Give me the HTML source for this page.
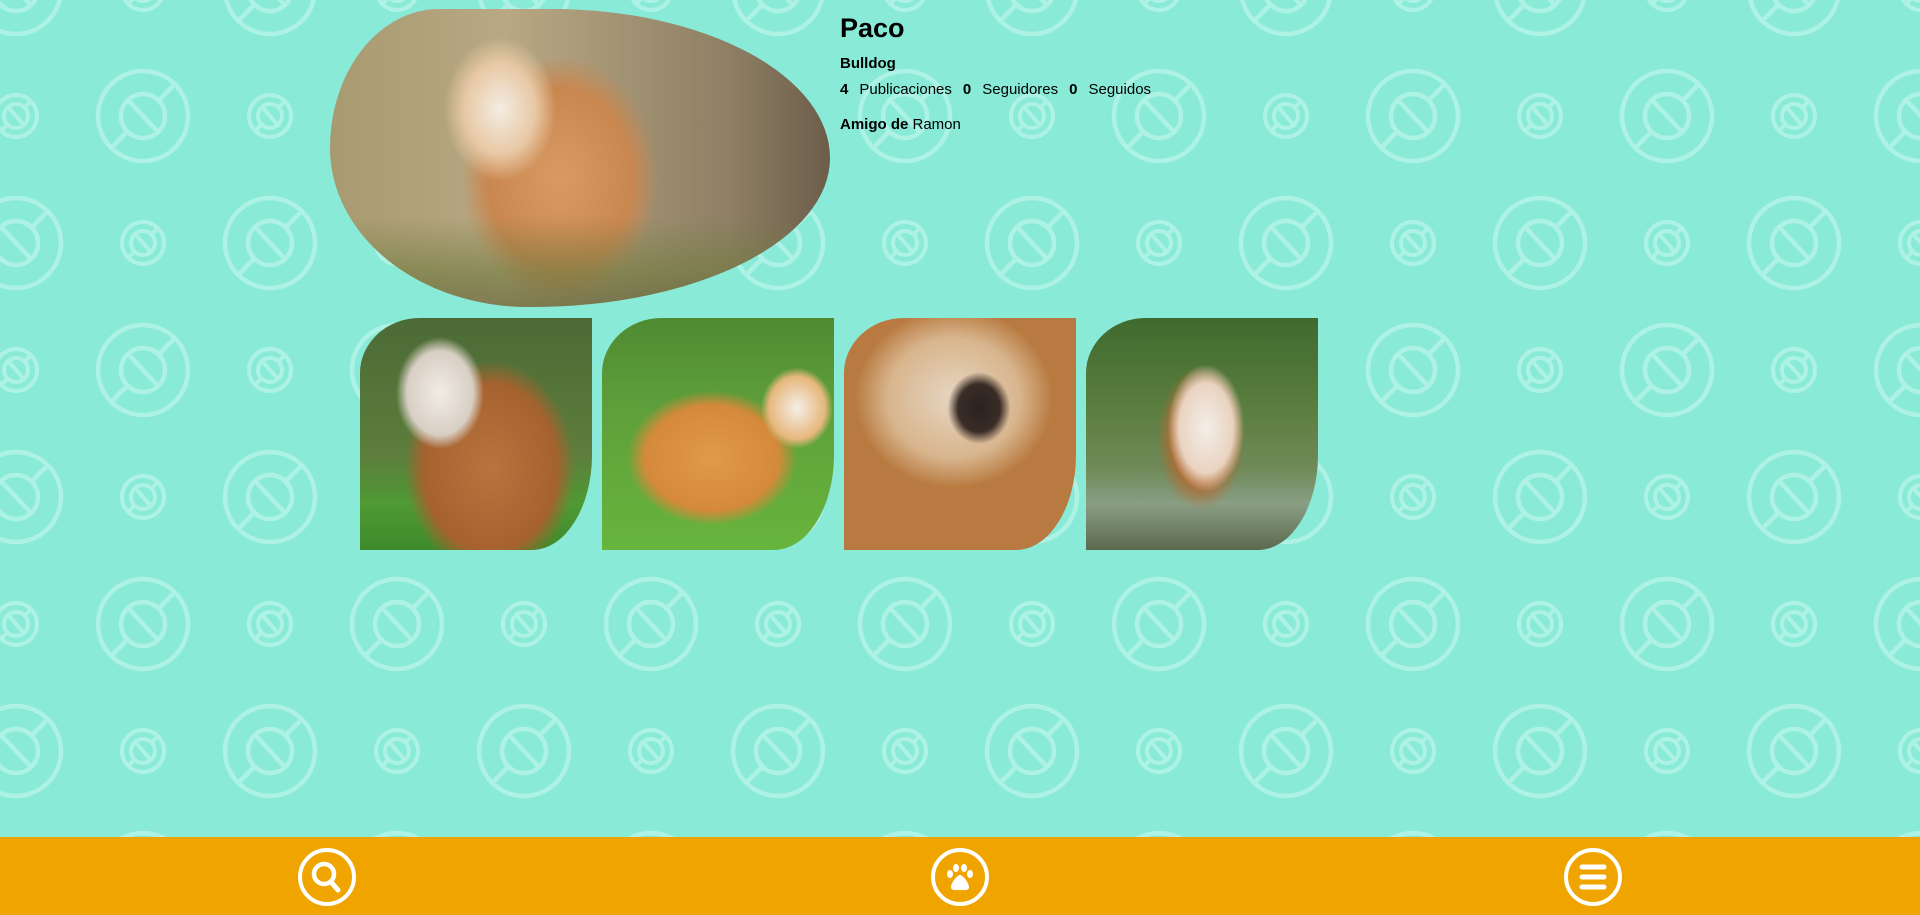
<!DOCTYPE html>
<html><head><meta charset="utf-8"><style>
html,body{margin:0;padding:0;width:1920px;height:915px;overflow:hidden;font-family:"Liberation Sans","DejaVu Sans",sans-serif;}
body{background:#89ebd7;position:relative;}
#bg{position:absolute;left:0;top:0;}
.main{position:absolute;left:330px;top:9px;width:500px;height:298px;border-radius:110px 280px 300px 200px / 140px 150px 150px 160px;overflow:hidden;
background:radial-gradient(ellipse 70px 90px at 170px 100px,#f3ece2 0,#e8c9a6 50%,transparent 80%),
radial-gradient(ellipse 120px 150px at 230px 170px,#d99a62 0,#c98750 60%,transparent 82%),
linear-gradient(90deg,#a89a70 0,#b8a884 35%,#8e7f64 80%,#6c5d4a 100%);}
.main:after{content:"";position:absolute;left:0;right:0;bottom:0;height:90px;background:linear-gradient(180deg,transparent,#6f7a3e 60%,#5a5f32);opacity:.6}
.t{position:absolute;top:318px;width:232px;height:232px;border-radius:60px 0 60px 0 / 55px 0 95px 0;overflow:hidden;}
.t1{left:360px;background:radial-gradient(ellipse 55px 70px at 80px 75px,#f1ece6 0,#d8cfc4 60%,transparent 80%),radial-gradient(ellipse 95px 120px at 130px 150px,#b8743e 0,#a5622f 70%,transparent 90%),linear-gradient(180deg,#4c6a36 0,#5d7e3c 60%,#4f9a34 80%,#3f8a2b 100%);}
.t2{left:602px;background:radial-gradient(ellipse 40px 45px at 195px 90px,#f4efe8 0,#e6b77c 70%,transparent 90%),radial-gradient(ellipse 95px 75px at 110px 140px,#e09a4a 0,#d48a3a 70%,transparent 90%),linear-gradient(180deg,#4f8a32 0,#5ea03a 40%,#67b53d 100%);}
.t3{left:844px;background:radial-gradient(ellipse 35px 40px at 135px 90px,#2a2220 0,#3a2c26 60%,transparent 90%),radial-gradient(ellipse 110px 100px at 110px 80px,#e6d6c2 0,#d8b58d 60%,#b87a40 90%),linear-gradient(180deg,#c48a50 0,#c48a50 60%,#b98040 70%,#c8c3bb 72%,#e6e2dc 100%);}
.t4{left:1086px;background:radial-gradient(ellipse 45px 75px at 120px 110px,#f4eee8 0,#e9d3c0 60%,transparent 85%),radial-gradient(ellipse 55px 90px at 115px 120px,#c0783e 0,#b06a32 50%,transparent 80%),linear-gradient(180deg,#3f6a2e 0,#5c7e40 40%,#6f8a58 65%,#8a9e84 80%,#5c6a4e 100%);}
.info{position:absolute;left:840px;top:12px;color:#000;}
.name{font-size:27px;font-weight:bold;margin:0;line-height:32px;}
.breed{font-size:15px;font-weight:bold;margin-top:11px;line-height:18px;}
.stats{font-size:15px;margin-top:8px;line-height:18px;}
.stats b{margin-right:11px}.stats span{margin-right:11px}
.amigo{font-size:15px;margin-top:17px;line-height:18px;}
.foot{position:absolute;left:0;top:837px;width:1920px;height:78px;background:#f0a400;}
.foot svg{position:absolute;top:10px;}
</style></head><body>
<svg id="bg" width="1920" height="837">
<defs>
<g id="big" fill="none" stroke="#aef2e6" stroke-width="4.5">
<circle r="45"/><circle r="22"/><line x1="-14" y1="-15" x2="14" y2="15"/><line x1="16" y1="-16" x2="32" y2="-32"/><line x1="-16" y1="16" x2="-32" y2="32"/>
</g>
<g id="sm" fill="none" stroke="#aef2e6" stroke-width="4">
<circle r="21"/><circle r="12"/><line x1="-7" y1="-8" x2="7" y2="8"/><line x1="9" y1="-9" x2="16" y2="-16"/><line x1="-9" y1="9" x2="-16" y2="16"/>
</g>
<pattern id="p" x="16" y="-11" width="254" height="254" patternUnits="userSpaceOnUse">
<use href="#big" x="0" y="0"/><use href="#big" x="254" y="0"/><use href="#big" x="0" y="254"/><use href="#big" x="254" y="254"/>
<use href="#big" x="127" y="127"/>
<use href="#sm" x="127" y="0"/><use href="#sm" x="127" y="254"/>
<use href="#sm" x="0" y="127"/><use href="#sm" x="254" y="127"/>
</pattern>
</defs>
<rect width="1920" height="837" fill="url(#p)"/>
</svg>
<div class="main"></div>
<div class="info">
<div class="name">Paco</div>
<div class="breed">Bulldog</div>
<div class="stats"><b>4</b><span>Publicaciones</span><b>0</b><span>Seguidores</span><b>0</b><span>Seguidos</span></div>
<div class="amigo"><b>Amigo de</b> Ramon</div>
</div>
<div class="t t1"></div><div class="t t2"></div><div class="t t3"></div><div class="t t4"></div>
<div class="foot">
<svg style="left:297px" width="60" height="60" viewBox="0 0 60 60"><circle cx="30" cy="30" r="27" fill="none" stroke="#fff" stroke-width="4"/><circle cx="27" cy="27" r="10" fill="none" stroke="#fff" stroke-width="4.5"/><line x1="34" y1="35" x2="41" y2="43" stroke="#fff" stroke-width="5" stroke-linecap="round"/></svg>
<svg style="left:930px" width="60" height="60" viewBox="0 0 60 60"><circle cx="30" cy="30" r="27" fill="none" stroke="#fff" stroke-width="4"/><ellipse cx="20" cy="27" rx="3" ry="4" fill="#fff"/><ellipse cx="26" cy="21" rx="3" ry="4" fill="#fff"/><ellipse cx="34" cy="21" rx="3" ry="4" fill="#fff"/><ellipse cx="40" cy="27" rx="3" ry="4" fill="#fff"/><path d="M30 28 C27 28 21 36 21 40 C21 44 25 43 30 43 C35 43 39 44 39 40 C39 36 33 28 30 28Z" fill="#fff"/></svg>
<svg style="left:1563px" width="60" height="60" viewBox="0 0 60 60"><circle cx="30" cy="30" r="27" fill="none" stroke="#fff" stroke-width="4"/><line x1="19" y1="20" x2="41" y2="20" stroke="#fff" stroke-width="5" stroke-linecap="round"/><line x1="19" y1="30" x2="41" y2="30" stroke="#fff" stroke-width="5" stroke-linecap="round"/><line x1="19" y1="40" x2="41" y2="40" stroke="#fff" stroke-width="5" stroke-linecap="round"/></svg>
</div>
</body></html>
